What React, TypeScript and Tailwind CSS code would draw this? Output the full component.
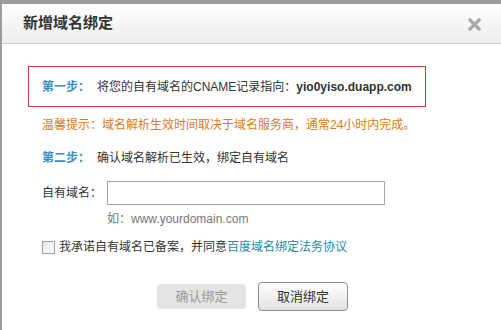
export default function App() {
  return (
    <div className="w-[501px] h-[330px] overflow-hidden bg-[#9c9c9c] pt-[4px] pl-[2px] font-['Liberation_Sans','Noto_Sans_CJK_SC',sans-serif] text-[12px] text-[#333]">
      <div className="h-full bg-white">
        <div className="flex h-[40px] items-center justify-between border-b border-[#cdcdcd] bg-gradient-to-b from-white to-[#ededed] pl-[21px] pr-[20px]">
          <span className="text-[15px] font-bold text-[#333]">新增域名绑定</span>
          <svg width="13" height="13" viewBox="0 0 13 13" className="mt-[2px]">
            <path d="M2 2 L11 11 M11 2 L2 11" stroke="#a8a8a8" strokeWidth="3.2" strokeLinecap="square" />
          </svg>
        </div>

        <div className="pl-[26px]">
          <div className="mt-[22px] flex h-[41px] w-[398px] items-center border border-[#c23a48] pl-[13px]">
            <span className="font-bold text-[#3d8ec0]">第一步：</span>
            <span className="ml-[7px]">将您的自有域名的CNAME记录指向：</span>
            <span className="text-[12px] font-bold">yio0yiso.duapp.com</span>
          </div>

          <div className="mt-[8px] pl-[14px] leading-[20px] text-[#e07a21]">
            温馨提示：域名解析生效时间取决于域名服务商，通常24小时内完成。
          </div>

          <div className="mt-[13px] flex pl-[14px] leading-[20px]">
            <span className="font-bold text-[#3d8ec0]">第二步：</span>
            <span className="ml-[7px]">确认域名解析已生效，绑定自有域名</span>
          </div>

          <div className="mt-[13px] flex items-center pl-[14px]">
            <span className="w-[65px]">自有域名：</span>
            <input className="h-[24px] w-[278px] border border-[#a5a5a5] bg-white px-1 outline-none" />
          </div>

          <div className="mt-[6px] pl-[79px] leading-[16px] text-[#777]">如：www.yourdomain.com</div>

          <div className="mt-[12px] flex items-center pl-[14px] leading-[16px]">
            <span className="h-[13px] w-[13px] border border-[#a0a0a0] bg-gradient-to-br from-[#e6e6e6] to-white" />
            <span className="ml-[4px]">我承诺自有域名已备案，并同意</span>
            <span className="text-[#1e8aa8]">百度域名绑定法务协议</span>
          </div>

          <div className="mt-[27px] flex items-center pl-[129px]">
            <button className="h-[25px] w-[89px] rounded-[4px] bg-[#e4e4e4] text-[13px] text-[#9a9a9a]">确认绑定</button>
            <button className="ml-[12px] h-[29px] w-[90px] rounded-[4px] border border-[#8f8f8f] bg-gradient-to-b from-white to-[#e3e3e3] text-[13px] text-[#333]">取消绑定</button>
          </div>
        </div>
      </div>
    </div>
  );
}
